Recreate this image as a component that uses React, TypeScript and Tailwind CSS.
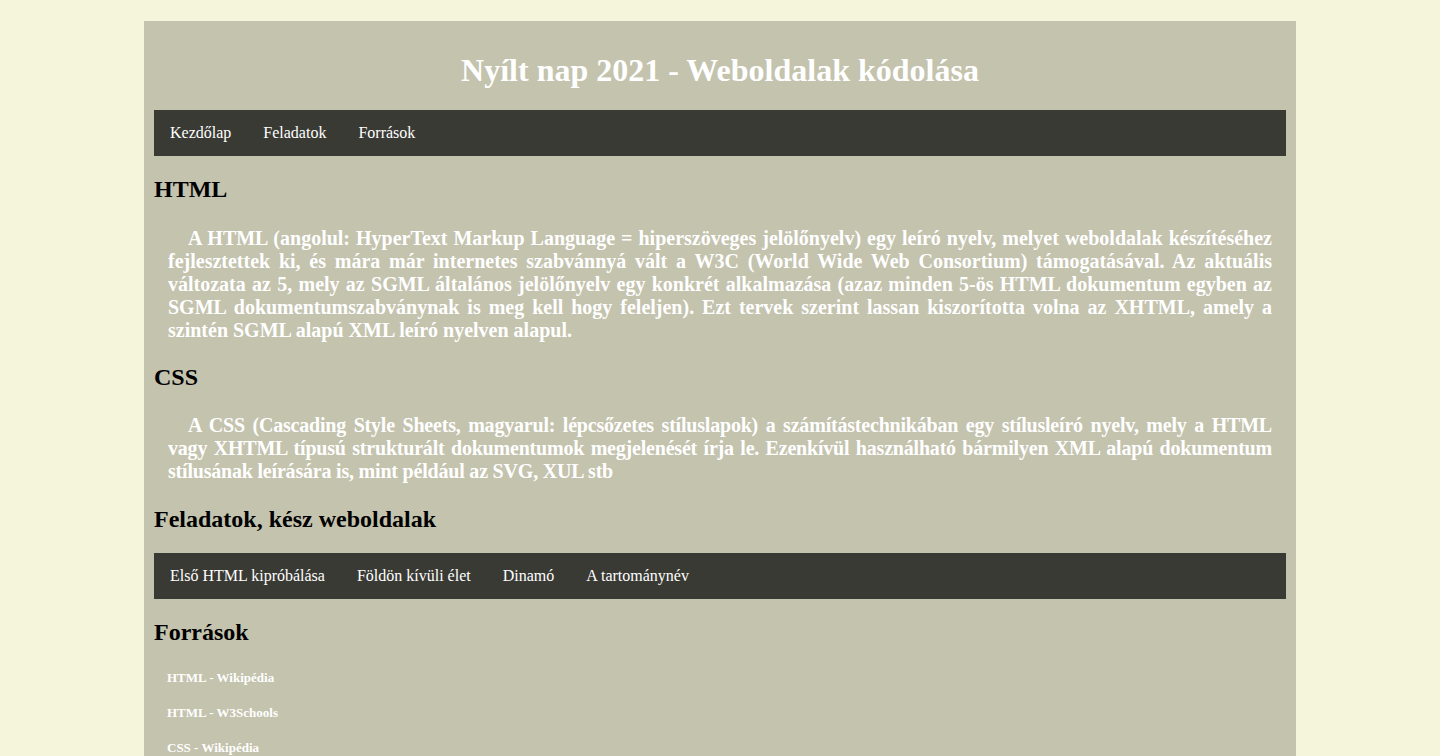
import React from "react";

const fo = ["Kezdőlap", "Feladatok", "Források"];
const feladatok = ["Első HTML kipróbálása", "Földön kívüli élet", "Dinamó", "A tartománynév"];
const forrasok = ["HTML - Wikipédia", "HTML - W3Schools", "CSS - Wikipédia"];

function Nav({ items }: { items: string[] }) {
  return (
    <ul className="flex bg-[#3a3a35]">
      {items.map((item) => (
        <li key={item}>
          <a href="#" className="block px-4 py-[14px] text-[16px] leading-[18px] text-white">
            {item}
          </a>
        </li>
      ))}
    </ul>
  );
}

export default function App() {
  return (
    <div className="min-h-screen bg-[#f5f5dc] pt-[21px] font-['Liberation_Serif',serif]">
      <div className="mx-auto w-[1152px] bg-[#c4c3ae] p-[10px]">
        <h1 className="my-[21px] text-center text-[32px] font-bold leading-[37px] text-white">
          Nyílt nap 2021 - Weboldalak kódolása
        </h1>
        <Nav items={fo} />
        <h2 className="mt-[19px] text-[24px] font-bold leading-[28px] text-black">HTML</h2>
        <p className="mt-6 mb-[21px] px-[14px] indent-5 text-justify text-[20px] font-bold leading-[23px] text-white">
          A HTML (angolul: HyperText Markup Language = hiperszöveges jelölőnyelv) egy leíró nyelv, melyet
          weboldalak készítéséhez fejlesztettek ki, és mára már internetes szabvánnyá vált a W3C (World Wide
          Web Consortium) támogatásával. Az aktuális változata az 5, mely az SGML általános jelölőnyelv egy
          konkrét alkalmazása (azaz minden 5-ös HTML dokumentum egyben az SGML dokumentumszabványnak is meg
          kell hogy feleljen). Ezt tervek szerint lassan kiszorította volna az XHTML, amely a szintén SGML
          alapú XML leíró nyelven alapul.
        </p>
        <h2 className="text-[24px] font-bold leading-[28px] text-black">CSS</h2>
        <p className="mt-[23px] mb-[22px] px-[14px] indent-5 text-justify text-[20px] font-bold leading-[23px] tracking-[-0.2px] text-white">
          A CSS (Cascading Style Sheets, magyarul: lépcsőzetes stíluslapok) a számítástechnikában egy
          stílusleíró nyelv, mely a HTML vagy XHTML típusú strukturált dokumentumok megjelenését írja le.
          Ezenkívül használható bármilyen XML alapú dokumentum stílusának leírására is, mint például az SVG,
          XUL stb
        </p>
        <h2 className="mb-5 text-[24px] font-bold leading-[28px] text-black">Feladatok, kész weboldalak</h2>
        <Nav items={feladatok} />
        <h2 className="mt-[19px] text-[24px] font-bold leading-[28px] text-black">Források</h2>
        <ul className="mt-[14px] px-[13px]">
          {forrasok.map((f) => (
            <li key={f}>
              <a href="#" className="block py-[10px] text-[13px] font-bold leading-[15px] text-white">
                {f}
              </a>
            </li>
          ))}
        </ul>
      </div>
    </div>
  );
}
